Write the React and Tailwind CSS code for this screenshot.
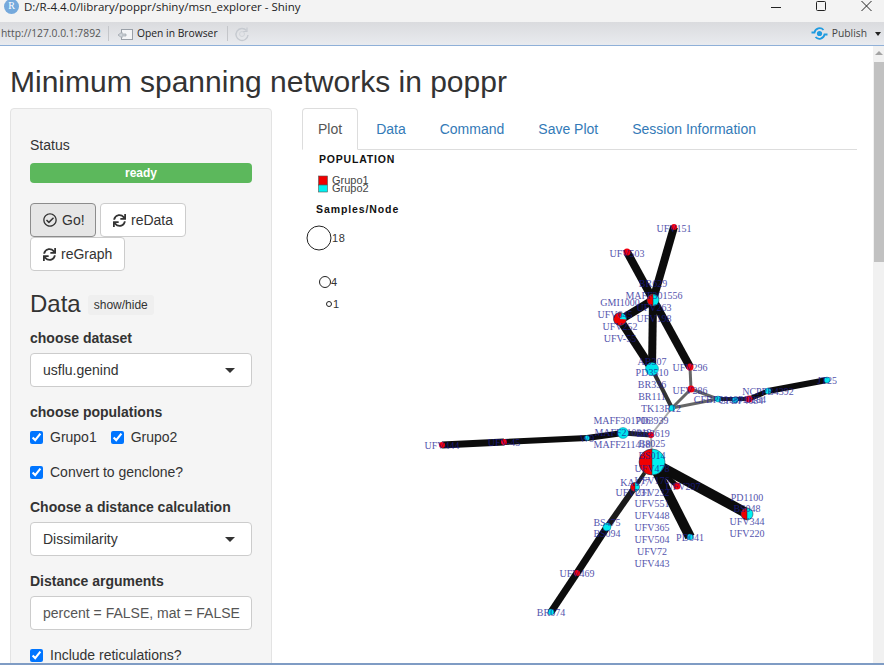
import React from "react";
import { FaRegCheckCircle, FaSync } from "react-icons/fa";

const thick = [
  [[674, 227], [653, 300], 8],
  [[627, 252], [690, 367], 8],
  [[653, 300], [620, 320], 8],
  [[620, 320], [652, 369], 8],
  [[653, 300], [652, 369], 8],
  [[652, 369], [672, 408], 4, "#333"],
  [[690, 367], [691, 389], 3, "#666"],
  [[691, 389], [672, 408], 3, "#666"],
  [[691, 389], [718, 399], 3, "#666"],
  [[672, 408], [718, 399], 3, "#666"],
  [[718, 399], [749, 399], 4, "#222"],
  [[749, 399], [768, 391], 5],
  [[768, 391], [827, 380], 6],
  [[672, 408], [651, 435], 2, "#aaa"],
  [[651, 435], [652, 462], 2, "#aaa"],
  [[442, 445], [504, 442], 7],
  [[504, 442], [587, 438], 6],
  [[587, 438], [623, 433], 6],
  [[623, 433], [651, 435], 5, "#222"],
  [[652, 462], [748, 514], 10],
  [[652, 462], [690, 537], 10],
  [[652, 462], [677, 486], 5],
  [[652, 462], [635, 487], 4, "#222"],
  [[635, 487], [607, 527], 6, "#1a1a1a"],
  [[607, 527], [577, 573], 7],
  [[577, 573], [551, 612], 7],
];

const red = [
  [674, 227, 3], [627, 252, 3.5], [690, 367, 3.5], [691, 389, 3.5], [749, 399, 3.5],
  [442, 445, 3], [504, 442, 3], [651, 435, 3], [677, 486, 3.5], [577, 573, 3],
];
const cyan = [
  [652, 369, 6.5], [672, 408, 3], [718, 399, 3], [735, 400, 3], [768, 391, 3], [827, 380, 3],
  [587, 438, 2.5], [623, 433, 5.5], [690, 537, 3], [607, 527, 4], [551, 612, 3],
];
const pies = [
  [653, 300, 6, 0.5, 0], [620, 319, 6.5, 0.78, -35], [652, 462, 13, 0.5, 0], [635, 487, 4.5, 0.5, 0], [747, 514, 6, 0.5, 0],
];

const labels = [
  ["UFV151", 674, 228], ["UFV503", 627, 253], ["BR629", 653, 283], ["MAFF301556", 654, 295],
  ["GMI1000", 620, 302], ["UFV645", 615, 314], ["UFV263", 654, 307], ["UFV198", 654, 318],
  ["UFV252", 620, 326], ["UFV-55", 620, 338], ["AB307", 652, 361], ["PD3510", 652, 372],
  ["BR336", 652, 384], ["BR111", 652, 396], ["TK13R12", 661, 408], ["UFV296", 690, 367],
  ["UFV286", 690, 390], ["CFBP5018", 716, 399], ["CFBP4684", 741, 400], ["PD284", 752, 399],
  ["NCPPB4392", 768, 391], ["JT25", 827, 380], ["MAFF301706", 622, 420], ["PD3939", 652, 420],
  ["MAFF210219", 623, 432], ["BR3619", 653, 433], ["MAFF211418", 622, 444], ["B8025", 652, 443],
  ["UFV444", 442, 445], ["UFV-45", 504, 442], ["W9", 587, 438], ["BS014", 652, 455],
  ["UFV478", 652, 468], ["UFV176", 652, 480], ["KA177", 635, 482], ["UFV231", 633, 492],
  ["UFV232", 652, 492], ["UFV297", 683, 486], ["UFV551", 652, 503], ["UFV448", 652, 515],
  ["UFV365", 652, 527], ["UFV504", 652, 539], ["UFV72", 652, 551], ["UFV443", 652, 563],
  ["PD1100", 747, 497], ["BS048", 747, 508], ["UFV344", 747, 521], ["UFV220", 747, 533],
  ["PD041", 690, 537], ["BS475", 607, 522], ["BS094", 607, 533], ["UFV469", 577, 573], ["BR074", 551, 612],
];

function Pie({ x, y, r, f, rot }) {
  const h = Math.PI * f;
  const ax = x - r * Math.cos(h);
  const ay = y - r * Math.sin(h);
  const by = y + r * Math.sin(h);
  const large = f > 0.5 ? 1 : 0;
  return (
    <g transform={`rotate(${rot} ${x} ${y})`}>
      <circle cx={x} cy={y} r={r} fill="#00f0f0" />
      <path d={`M${x} ${y}L${ax} ${ay}A${r} ${r} 0 ${large} 0 ${ax} ${by}Z`} fill="#f00000" />
      {f === 0.5 && <line x1={x} y1={y - r} x2={x} y2={y + r} stroke="#223" strokeWidth="0.5" />}
      <circle cx={x} cy={y} r={r} fill="none" stroke="#224" strokeWidth="0.5" />
    </g>
  );
}

function Network() {
  return (
    <svg width="571" height="515" viewBox="302 150 571 515" className="block">
      {thick.map(([a, b, w, c], i) => (
        <line key={i} x1={a[0]} y1={a[1]} x2={b[0]} y2={b[1]} stroke={c || "#0c0c0c"} strokeWidth={w} />
      ))}
      {red.map(([x, y, r], i) => <circle key={i} cx={x} cy={y} r={r} fill="#f00010" />)}
      {cyan.map(([x, y, r], i) => <circle key={i} cx={x} cy={y} r={r} fill="#00e6ee" stroke="#068" strokeWidth="0.4" />)}
      {pies.map(([x, y, r, f, rot], i) => <Pie key={i} x={x} y={y} r={r} f={f} rot={rot} />)}
      <g fontFamily="'Liberation Serif', serif" fontSize="10" fill="#1c1c96" textAnchor="middle" opacity="0.78">
        {labels.map(([t, x, y], i) => <text key={i} x={x} y={y + 3.5}>{t}</text>)}
      </g>
      <g fontFamily="'Liberation Sans', sans-serif">
        <text x="319" y="163" fontSize="10.5" fontWeight="700" letterSpacing="0.8" fill="#111">POPULATION</text>
        <rect x="318.5" y="176" width="9" height="9" fill="#f00000" stroke="#555" strokeWidth="0.6" />
        <rect x="318.5" y="185" width="9" height="7" fill="#00f0f0" stroke="#555" strokeWidth="0.6" />
        <text x="332" y="184" fontSize="11" fill="#444">Grupo1</text>
        <text x="332" y="192" fontSize="11" fill="#444">Grupo2</text>
        <text x="316" y="213" fontSize="10.5" fontWeight="700" letterSpacing="0.9" fill="#111">Samples/Node</text>
        <circle cx="319" cy="238" r="12" fill="none" stroke="#222" />
        <text x="332" y="242" fontSize="11" letterSpacing="0.6" fill="#333">18</text>
        <circle cx="325" cy="282" r="5.5" fill="none" stroke="#222" />
        <text x="331" y="286" fontSize="11" fill="#333">4</text>
        <circle cx="329" cy="304" r="2.5" fill="none" stroke="#222" />
        <text x="333" y="308" fontSize="11" fill="#333">1</text>
      </g>
    </svg>
  );
}

function Check({ label, className = "" }) {
  return (
    <label className={"flex items-center h-5 text-[#333] " + className}>
      <input type="checkbox" defaultChecked className="w-[13px] h-[13px] m-0 accent-[#0075ff]" />
      <span className="ml-[7px]">{label}</span>
    </label>
  );
}

function Field({ label, mt = "mt-[15px]" }) {
  return <div className={"h-5 font-bold text-[#333] mb-[5px] " + mt}>{label}</div>;
}

function Select({ value }) {
  return (
    <div className="h-[34px] bg-white border border-[#ccc] rounded-[4px] flex items-center justify-between pl-3 pr-[16px] text-[#333]">
      <span>{value}</span>
      <span className="w-0 h-0 border-x-[5px] border-x-transparent border-t-[5px] border-t-[#333]" />
    </div>
  );
}

function Btn({ icon, children, active, className = "" }) {
  return (
    <div className={"h-[34px] px-3 flex items-center gap-[5px] rounded-[4px] border text-[#333] " + (active ? "bg-[#e6e6e6] border-[#8c8c8c] " : "bg-white border-[#ccc] ") + className}>
      {icon}
      <span>{children}</span>
    </div>
  );
}

function Sidebar() {
  return (
    <div className="w-[262px] shrink-0 bg-[#f5f5f5] border border-[#e3e3e3] rounded-[4px] p-[19px] h-[700px]">
      <div className="mt-[7px] h-5 text-[#333]">Status</div>
      <div className="mt-[8px] h-5 rounded-[4px] bg-[#5cb85c] text-white text-xs font-bold flex items-center justify-center">ready</div>
      <div className="mt-5 flex flex-wrap gap-x-1">
        <Btn active className="w-[66px] gap-[4px]" icon={<FaRegCheckCircle className="w-[14px] h-[14px] shrink-0" />}>Go!</Btn>
        <Btn icon={<FaSync className="w-[13px] h-[13px]" />}>reData</Btn>
        <Btn icon={<FaSync className="w-[13px] h-[13px]" />}>reGraph</Btn>
      </div>
      <div className="mt-5 h-[26px] flex items-center gap-[7px]">
        <span className="text-2xl text-[#333]">Data</span>
        <span className="h-5 mt-[2px] px-[6px] rounded-[3px] bg-[#efefef] text-xs flex items-center text-[#333]">show/hide</span>
      </div>
      <Field label="choose dataset" mt="mt-[11px]" />
      <Select value="usflu.genind" />
      <Field label="choose populations" />
      <div className="flex gap-[14px]">
        <Check label="Grupo1" />
        <Check label="Grupo2" />
      </div>
      <Check label="Convert to genclone?" className="mt-[15px]" />
      <Field label="Choose a distance calculation" />
      <Select value="Dissimilarity" />
      <Field label="Distance arguments" />
      <div className="h-[34px] bg-white border border-[#ccc] rounded-[4px] flex items-center pl-3 text-[#555] whitespace-nowrap">percent = FALSE, mat = FALSE</div>
      <Check label="Include reticulations?" className="mt-[15px]" />
    </div>
  );
}

function Tabs() {
  const items = ["Data", "Command", "Save Plot", "Session Information"];
  return (
    <div className="w-[555px] h-[42px] flex border-b border-[#ddd]">
      <div className="h-[42px] px-[15px] py-[10px] mr-[2px] bg-white border border-[#ddd] border-b-white rounded-t-[4px] text-[#555]">Plot</div>
      {items.map((t) => (
        <div key={t} className="h-[41px] px-[16px] py-[11px] mr-[2px] text-[#337ab7] whitespace-nowrap">{t}</div>
      ))}
    </div>
  );
}

function TitleBar() {
  return (
    <div className="h-[22px] shrink-0 bg-[#f3f3f3] flex items-center overflow-hidden">
      <div className="ml-[4px] -mt-[9px] w-[15px] h-[15px] rounded-full bg-[#75a9dc] text-white flex items-center justify-center text-[10px] font-['Liberation_Serif',serif]">R</div>
      <div className="ml-[5px] -mt-[8px] text-[11.5px] leading-[16px] text-[#222] whitespace-nowrap font-['Open_Sans',sans-serif]">D:/R-4.4.0/library/poppr/shiny/msn_explorer - Shiny</div>
      <div className="ml-auto -mt-[10px] flex items-center gap-[35px] pr-[12px]">
        <svg width="10" height="10" viewBox="0 0 10 10"><line x1="0" y1="6.5" x2="10" y2="6.5" stroke="#222" /></svg>
        <svg width="10" height="10" viewBox="0 0 10 10"><rect x="0.5" y="0.5" width="9" height="9" rx="1" fill="none" stroke="#222" /></svg>
        <svg width="11" height="10" viewBox="0 0 11 10"><path d="M0.5 0L10.5 10M10.5 0L0.5 10" stroke="#222" /></svg>
      </div>
    </div>
  );
}

function Toolbar() {
  return (
    <div className="h-[24px] shrink-0 bg-gradient-to-b from-[#dadbde] to-[#e9ebef] border-b border-[#8fb0d8] flex items-center text-[10.3px] font-['Open_Sans',sans-serif]">
      <span className="ml-[1px] w-[107px] text-[#555] whitespace-nowrap">http://127.0.0.1:7892</span>
      <span className="w-px h-[15px] bg-[#c4c6ca]" />
      <svg className="ml-[8px]" width="16" height="14" viewBox="0 0 16 14">
        <rect x="4.5" y="2.5" width="11" height="10" fill="#f4f5f7" stroke="#9aa0a8" />
        <path d="M1 8 L5 5 L5 7 L9 7 L9 9 L5 9 L5 11Z" fill="#cfd4da" stroke="#9aa0a8" strokeWidth="0.7" />
      </svg>
      <span className="ml-[4px] text-[#222] whitespace-nowrap w-[90px]">Open in Browser</span>
      <span className="w-px h-[15px] bg-[#c4c6ca]" />
      <svg className="ml-[6px]" width="16" height="16" viewBox="0 0 16 16" fill="none">
        <path d="M12.5 4.5A6 6 0 1 0 14 9" stroke="#c6cad0" strokeWidth="1.4" />
        <path d="M13 1.5V5.5H9" stroke="#c6cad0" strokeWidth="1.2" />
        <circle cx="8" cy="8" r="2.5" stroke="#d2d5da" />
      </svg>
      <svg className="ml-auto" width="17" height="13" viewBox="0 0 17 13" fill="none">
        <circle cx="8.5" cy="6.5" r="2.6" fill="#1f9be0" />
        <path d="M0.5 5.5H3.5A5.2 5.2 0 0 1 12.5 3" stroke="#1f9be0" strokeWidth="1.8" />
        <path d="M16.5 7.5H13.5A5.2 5.2 0 0 1 4.5 10" stroke="#1f9be0" strokeWidth="1.8" />
      </svg>
      <span className="ml-[4px] text-[#444]">Publish</span>
      <span className="ml-[8px] mr-[3px] w-0 h-0 border-x-[3px] border-x-transparent border-t-[4px] border-t-[#222]" />
    </div>
  );
}

export default function App() {
  return (
    <div className="w-[884px] h-[665px] overflow-hidden bg-white flex flex-col text-sm font-['Liberation_Sans',Arial,sans-serif]">
      <TitleBar />
      <Toolbar />
      <div className="flex-1 min-h-0 flex overflow-hidden">
        <div className="flex-1 min-w-0 px-[10px] overflow-hidden">
          <h1 className="mt-[19px] mb-[10px] h-[33px] leading-[33px] text-[30px] text-[#333] whitespace-nowrap">Minimum spanning networks in poppr</h1>
          <div className="flex gap-[30px]">
            <Sidebar />
            <div>
              <Tabs />
              <Network />
            </div>
          </div>
        </div>
        <div className="w-[11px] shrink-0 bg-[#f1f1f1] flex flex-col items-center">
          <span className="mt-[5px] w-0 h-0 border-x-[4px] border-x-transparent border-b-[4px] border-b-[#a3a3a3]" />
          <div className="mt-[7px] ml-[1px] w-[10px] h-[200px] bg-[#c1c1c1]" />
        </div>
      </div>
      <div className="h-[2px] shrink-0 bg-[#7f9cc4]" />
    </div>
  );
}
